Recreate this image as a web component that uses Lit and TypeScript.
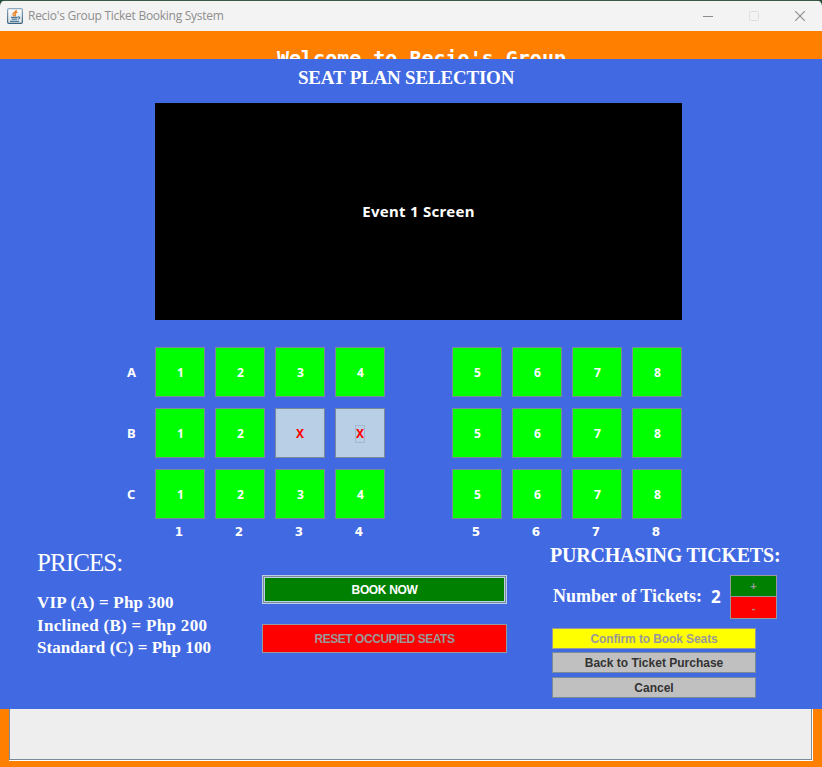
import { LitElement, html, css } from "lit";
import { customElement, property } from "lit/decorators.js";
import { classMap } from "lit/directives/class-map.js";

@customElement("window-bar")
class WindowBar extends LitElement {
  @property() caption = "";

  static styles = css`
    :host { display: block; height: 31px; background: #2b4d3b; }
    .bar {
      display: flex; align-items: center; box-sizing: border-box;
      height: 31px; padding: 0 17px 0 7px;
      background: linear-gradient(#3b5b48 0 1px, #f3f3f3 1px);
      border-radius: 6px 6px 0 0;
    }
    .caption {
      flex: 1; margin-left: 5px; color: #8e8e8e; white-space: nowrap;
      font: 12px/30px "Open Sans", sans-serif; letter-spacing: -0.27px;
    }
    .controls { display: flex; gap: 36px; align-items: center; }
    svg { display: block; }
  `;

  render() {
    return html`<div class="bar">
      <svg width="16" height="16" viewBox="0 0 16 16" fill="none">
        <defs><linearGradient id="g" x2="0" y2="1"><stop stop-color="#8fa9bd"/><stop offset="1" stop-color="#386381"/></linearGradient>
        <linearGradient id="f" x2="0" y2="1"><stop stop-color="#fff"/><stop offset="1" stop-color="#d4dee5"/></linearGradient></defs>
        <rect x=".6" y=".6" width="14.8" height="14.8" rx="1.3" fill="url(#f)" stroke="url(#g)" stroke-width="1.2"/>
        <path d="M9.3 1.8C9.7 4 5.6 4.3 5.9 6.3c.1.9.9 1.4 1.4 2M10.4 3.9C8.8 4.6 7.6 5.3 8 6.3c.3.8.9 1 .2 2" stroke="#e9801e" stroke-width="1.3"/>
        <path d="M4 9.3h6.8M4.6 11.1h5.6M11 9c2.1-.7 2.4 1.6.2 2.1M3 13.4h9" stroke="#4f7c9c" stroke-width="1.2"/>
      </svg>
      <div class="caption">${this.caption}</div>
      <div class="controls">
        <svg width="10" height="10"><path d="M0 5.5h10" stroke="#8c8c8c"/></svg>
        <svg width="10" height="10"><rect x=".5" y=".5" width="9" height="9" rx="1" fill="none" stroke="#dedede"/></svg>
        <svg width="10" height="10"><path d="M0 0l10 10M10 0L0 10" stroke="#8c8c8c" stroke-width="1.1"/></svg>
      </div>
    </div>`;
  }
}

@customElement("seat-map")
class SeatMap extends LitElement {
  static styles = css`
    :host { display: block; color: #fff; font: bold 12px "Noto Sans", sans-serif; }
    .map {
      display: grid; width: 555px; margin-left: 127px;
      grid-template-columns: 28px repeat(4, 60px) 57px repeat(3, 60px) 50px;
      grid-template-rows: repeat(3, 61px);
    }
    .row { line-height: 50px; font-size: 13px; }
    .seat {
      box-sizing: border-box; width: 50px; height: 50px; background: #0f0;
      border: 1px solid #7a8a99; display: flex; align-items: center; justify-content: center;
      padding: 1px 0 0 1px;
    }
    .taken { background: #b8cfe5; color: #f00; padding: 1px 0 0; }
    .focus { outline: 1px solid #a3b8cc; width: 8px; height: 16px; line-height: 16px; text-align: center; }
    .column { width: 48px; text-align: center; line-height: 20px; margin-top: -8px; font-family: "DejaVu Sans", sans-serif; font-size: 12px; }
  `;

  private taken = ["B3", "B4"];
  private focused = "B4";

  private seat(row: string, n: number) {
    const taken = this.taken.includes(row + n);
    return html`<div class=${classMap({ seat: true, taken })}>
      <span class=${classMap({ focus: this.focused === row + n })}>${taken ? "X" : n}</span>
    </div>`;
  }

  render() {
    const left = [1, 2, 3, 4];
    const right = [5, 6, 7, 8];
    return html`<div class="map">
      ${["A", "B", "C"].map((r) => html`<div class="row">${r}</div>
        ${left.map((n) => this.seat(r, n))}<div></div>${right.map((n) => this.seat(r, n))}`)}
      <div></div>
      ${left.map((n) => html`<div class="column">${n}</div>`)}<div></div>
      ${right.map((n) => html`<div class="column">${n}</div>`)}
    </div>`;
  }
}

@customElement("app-root")
class AppRoot extends LitElement {
  static styles = css`
    :host { display: block; width: 822px; height: 767px; overflow: hidden; background: #ff8000; }
    .welcome {
      height: 28px; overflow: hidden; color: #fff; white-space: nowrap;
      font: bold 20px/24px "DejaVu Sans Mono", monospace; padding: 15px 0 0 277px; box-sizing: border-box;
    }
    .panel { height: 650px; background: #4169e1; color: #fff; overflow: hidden; }
    .heading {
      font: bold 19px/24px "Liberation Serif", serif; height: 44px; padding: 7px 0 0 298px;
      box-sizing: border-box; white-space: nowrap; letter-spacing: -0.2px;
    }
    .screen {
      width: 527px; height: 217px; margin: 0 0 27px 155px; background: #000;
      display: flex; align-items: center; justify-content: center; box-sizing: border-box;
      padding-bottom: 2px; font: bold 15px "Noto Sans", sans-serif; letter-spacing: 0.27px;
    }
    .map { height: 193px; }
    .lower { display: flex; padding-left: 37px; white-space: nowrap; }
    .prices { width: 225px; padding-top: 7px; }
    .prices-title { font: 25px/32px "Liberation Serif", serif; letter-spacing: -0.9px; }
    .price { font: bold 17px/22.5px "Liberation Serif", serif; }
    .vip { letter-spacing: 0.2px; }
    .inclined { letter-spacing: 0.3px; }
    .standard { letter-spacing: 0.04px; }
    .price-list { padding-top: 13px; }
    .actions { width: 245px; padding-top: 35px; display: flex; flex-direction: column; gap: 20px; }
    .button {
      box-sizing: border-box; height: 21px; border: 1px solid #7a8a99; background: #c0c0c0; color: #333;
      display: flex; align-items: center; justify-content: center;
      font: bold 12px "Liberation Sans", sans-serif;
    }
    .tall { height: 29px; }
    .book { background: #008000; color: #fff; letter-spacing: -0.35px; border: 1px solid #b8cfe5; box-shadow: inset 0 0 0 1px #7a8a99, inset 0 0 0 2px #b8cfe5; }
    .off { color: #999; border-color: #999; }
    .red { background: #f00; }
    .reset { letter-spacing: -0.45px; }
    .green { background: #008000; }
    .yellow { background: #ff0; letter-spacing: -0.1px; }
    .purchase { margin-left: 43px; padding-top: 3px; }
    .purchase-title { font: bold 20px/24px "Liberation Serif", serif; letter-spacing: -0.23px; }
    .count { display: flex; height: 44px; margin: 8px 0 9px 3px; }
    .count-label { font: bold 18px/42px "Liberation Serif", serif; width: 158px; }
    .count-value { font: bold 17px/43px "Noto Sans", sans-serif; width: 19px; }
    .stepper { width: 47px; }
    .step { height: 22px; font-size: 11px; }
    .minus { height: 23px; margin-top: -1px; }
    .choices { width: 204px; margin-left: 2px; display: grid; grid-template-rows: 24px 25px 21px; }
    .below {
      height: 52px; box-sizing: border-box; margin: 0 9px; background: #eee;
      border: solid #fff; border-width: 0 1px 1px 0;
      box-shadow: inset 1px 0 #7a8a99, inset -1px -1px #7a8a99;
    }
  `;

  render() {
    return html`
      <window-bar caption="Recio's Group Ticket Booking System"></window-bar>
      <div class="welcome">Welcome to Recio's Group</div>
      <div class="panel">
        <div class="heading">SEAT PLAN SELECTION</div>
        <div class="screen">Event 1 Screen</div>
        <seat-map class="map"></seat-map>
        <div class="lower">
          <div class="prices">
            <div class="prices-title">PRICES:</div>
            <div class="price-list">
              <div class="price vip">VIP (A) = Php 300</div>
              <div class="price inclined">Inclined (B) = Php 200</div>
              <div class="price standard">Standard (C) = Php 100</div>
            </div>
          </div>
          <div class="actions">
            <div class="button tall book">BOOK NOW</div>
            <div class="button tall red reset off">RESET OCCUPIED SEATS</div>
          </div>
          <div class="purchase">
            <div class="purchase-title">PURCHASING TICKETS:</div>
            <div class="count">
              <div class="count-label">Number of Tickets:</div>
              <div class="count-value">2</div>
              <div class="stepper">
                <div class="button step green off">+</div>
                <div class="button step minus red off">-</div>
              </div>
            </div>
            <div class="choices">
              <div class="button yellow off">Confirm to Book Seats</div>
              <div class="button">Back to Ticket Purchase</div>
              <div class="button">Cancel</div>
            </div>
          </div>
        </div>
      </div>
      <div class="below"></div>
    `;
  }
}
